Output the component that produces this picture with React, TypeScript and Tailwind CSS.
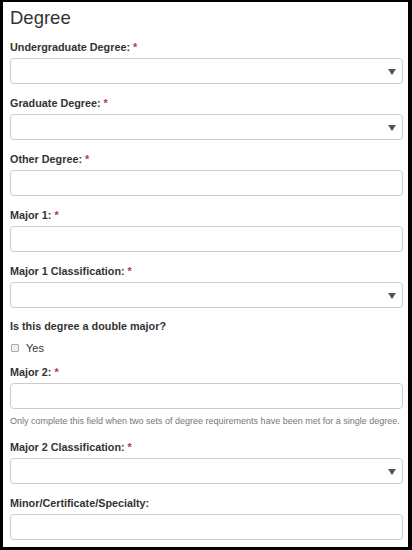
import React from "react";

const Caret = () => (
  <svg width="8" height="6" viewBox="0 0 8 6" className="absolute right-[6px] top-[10px]">
    <path d="M0 0 H8 L4 6 Z" fill="#555" />
  </svg>
);

const Label = ({ text, required = true }: { text: string; required?: boolean }) => (
  <div className="text-[10.8px] leading-[16px] font-bold text-[#333] mb-[3px]">
    {text}
    {required && <span className="text-[#a94442] ml-[3px]">*</span>}
  </div>
);

const Field = ({
  label,
  select = false,
  required = true,
  className = "",
}: {
  label: string;
  select?: boolean;
  required?: boolean;
  className?: string;
}) => (
  <div className={className}>
    <Label text={label} required={required} />
    <div className="relative h-[26px] w-full rounded-[4px] border border-[#ccc] bg-white">
      {select && <Caret />}
    </div>
  </div>
);

export default function App() {
  return (
    <div
      className="w-[412px] h-[550px] bg-black pt-[2px] pl-[3px] pr-[4px] pb-[3px]"
      style={{ fontFamily: '"Liberation Sans", Arial, sans-serif' }}
    >
      <div className="h-full bg-white pl-[7px] pr-[5px] pt-[6px]">
        <h1 className="text-[18.5px] leading-[20px] text-[#333] mb-[11px]">Degree</h1>

        <Field label="Undergraduate Degree:" select className="mb-[11px]" />
        <Field label="Graduate Degree:" select className="mb-[11px]" />
        <Field label="Other Degree:" className="mb-[11px]" />
        <Field label="Major 1:" className="mb-[11px]" />
        <Field label="Major 1 Classification:" select className="mb-[10px]" />

        <div className="text-[10.8px] leading-[16px] font-bold text-[#333]">
          Is this degree a double major?
        </div>
        <div className="flex items-center h-[16px] mt-[6px] mb-[8px] pl-[1px]">
          <span className="w-[8px] h-[8px] border border-[#aaa] bg-[#eee] rounded-[1px]" />
          <span className="ml-[7px] text-[11px] text-[#333]">Yes</span>
        </div>

        <Field label="Major 2:" />
        <div className="text-[9px] leading-[14px] text-[#777] mt-[5px] mb-[11px] whitespace-nowrap">
          Only complete this field when two sets of degree requirements have been met for a single degree.
        </div>

        <Field label="Major 2 Classification:" select className="mb-[11px]" />
        <Field label="Minor/Certificate/Specialty:" required={false} />
      </div>
    </div>
  );
}
